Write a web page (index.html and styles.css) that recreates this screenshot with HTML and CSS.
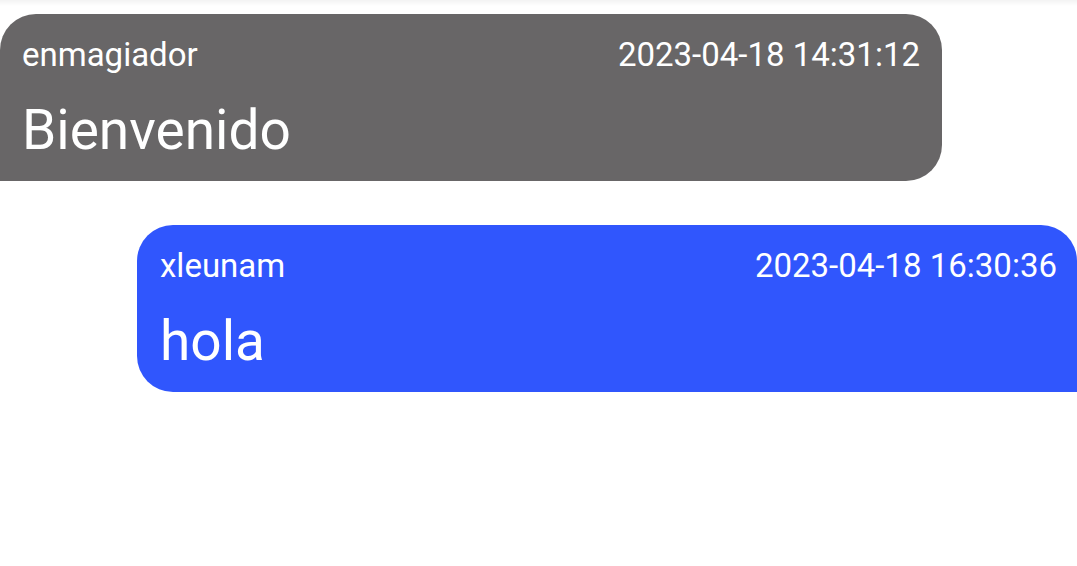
FILE: index.html
```html
<!DOCTYPE html>
<html lang="es">
<head>
<meta charset="utf-8">
<title>Chat</title>
<link rel="stylesheet" href="styles.css">
</head>
<body>
<div class="topshade"></div>
<main class="chat">
  <div class="msg msg-received">
    <div class="msg-head">
      <span class="msg-user">enmagiador</span>
      <span class="msg-time">2023-04-18 14:31:12</span>
    </div>
    <div class="msg-text">Bienvenido</div>
  </div>
  <div class="msg msg-sent">
    <div class="msg-head">
      <span class="msg-user">xleunam</span>
      <span class="msg-time">2023-04-18 16:30:36</span>
    </div>
    <div class="msg-text">hola</div>
  </div>
</main>
</body>
</html>
```
FILE: styles.css
```css
html, body {
  margin: 0;
  padding: 0;
  background: #ffffff;
}
body {
  width: 1077px;
  height: 566px;
  overflow: hidden;
  position: relative;
  font-family: Roboto, "Liberation Sans", sans-serif;
  color: #ffffff;
}
.topshade {
  position: absolute;
  top: 0;
  left: 0;
  right: 0;
  height: 6px;
  background: linear-gradient(#f3f3f3, rgba(255,255,255,0));
}
.chat {
  display: flex;
  flex-direction: column;
  gap: 44px;
  padding-top: 14px;
}
.msg {
  box-sizing: border-box;
  padding: 21px 22px 19px 22px;
  display: flex;
  flex-direction: column;
  gap: 24px;
}
.msg-received {
  width: 942px;
  background: #686667;
  border-radius: 36px 36px 36px 0;
  align-self: flex-start;
}
.msg-sent {
  width: 940px;
  background: #3056fd;
  border-radius: 36px 36px 0 36px;
  align-self: flex-end;
  padding-left: 23px;
  padding-right: 20px;
}
.msg-head {
  display: flex;
  justify-content: space-between;
  align-items: baseline;
  font-size: 33px;
  line-height: 39px;
}
.msg-text {
  font-size: 55px;
  line-height: 64px;
}
```
